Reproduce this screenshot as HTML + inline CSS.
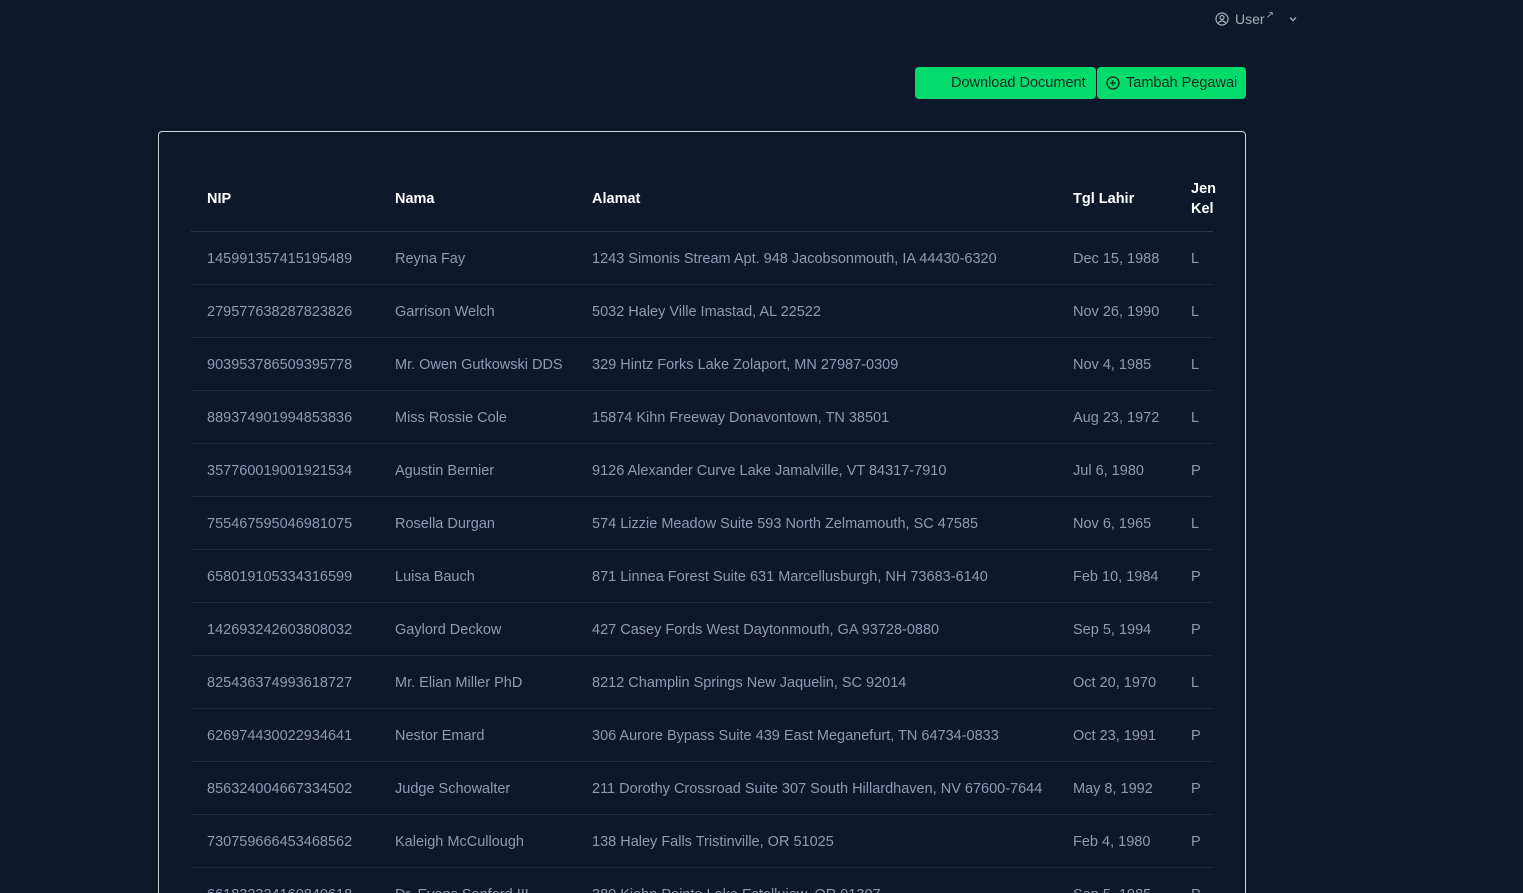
<!DOCTYPE html>
<html><head><meta charset="utf-8"><style>
*{box-sizing:border-box;margin:0;padding:0}
html,body{width:1523px;height:893px;overflow:hidden}
body{background:#0f172a;font-family:"Liberation Sans",sans-serif;color:#94a3b8;position:relative}
.user{position:absolute;left:1215px;top:11px;font-size:14px;color:#a6adbb;display:flex;align-items:center;gap:6px}
.btn{position:absolute;top:67px;height:32px;background:#04db6d;color:#0f2a1e;font-size:14.5px;border-radius:4px;display:flex;align-items:center}
.card{position:absolute;left:158px;top:131px;width:1088px;height:800px;border:1px solid #d0d4dc;border-radius:4px}
table{position:absolute;left:32px;top:32px;width:1022px;border-collapse:collapse;font-size:14.5px;table-layout:fixed}
th{color:#fff;font-weight:bold;text-align:left;height:67px;padding:3px 16px 0;border-bottom:1px solid #2d3748;line-height:20px}
td{height:53px;padding:2px 16px 0;border-bottom:1px solid #1f2a3b;color:#8d9bb3;white-space:nowrap}
th:last-child,td:last-child{padding-right:0}
</style></head><body>
<div class="user"><svg width="14" height="14" viewBox="0 0 14 14" fill="none" stroke="#a6adbb" stroke-width="1.2"><circle cx="7" cy="7" r="6"/><circle cx="7" cy="5.5" r="2"/><path d="M3.2 11.2c1-1.6 2.3-2.2 3.8-2.2s2.8.6 3.8 2.2"/></svg><span>User</span><span style="font-size:10px;margin:-8px 0 0 -5px">↗</span><svg style="margin-left:8px" width="10" height="8" viewBox="0 0 10 8" fill="none" stroke="#a6adbb" stroke-width="1.4"><path d="M2 2.5l3 3 3-3"/></svg></div>
<div class="btn" style="left:915px;width:181px;padding-left:36px">Download Document</div>
<div class="btn" style="left:1097px;width:149px;padding-left:9px"><svg width="14" height="14" viewBox="0 0 14 14" fill="none" stroke="#0f2a1e" stroke-width="1.3" style="margin-right:6px"><circle cx="7" cy="7" r="6"/><path d="M7 4v6M4 7h6"/></svg>Tambah Pegawai</div>
<div class="card"><table>
<colgroup><col style="width:188px"><col style="width:197px"><col style="width:481px"><col style="width:118px"><col style="width:38px"></colgroup>
<tr><th>NIP</th><th>Nama</th><th>Alamat</th><th>Tgl Lahir</th><th>Jen<br>Kel</th></tr>
<tr><td>145991357415195489</td><td>Reyna Fay</td><td>1243 Simonis Stream Apt. 948 Jacobsonmouth, IA 44430-6320</td><td>Dec 15, 1988</td><td>L</td></tr>
<tr><td>279577638287823826</td><td>Garrison Welch</td><td>5032 Haley Ville Imastad, AL 22522</td><td>Nov 26, 1990</td><td>L</td></tr>
<tr><td>903953786509395778</td><td>Mr. Owen Gutkowski DDS</td><td>329 Hintz Forks Lake Zolaport, MN 27987-0309</td><td>Nov 4, 1985</td><td>L</td></tr>
<tr><td>889374901994853836</td><td>Miss Rossie Cole</td><td>15874 Kihn Freeway Donavontown, TN 38501</td><td>Aug 23, 1972</td><td>L</td></tr>
<tr><td>357760019001921534</td><td>Agustin Bernier</td><td>9126 Alexander Curve Lake Jamalville, VT 84317-7910</td><td>Jul 6, 1980</td><td>P</td></tr>
<tr><td>755467595046981075</td><td>Rosella Durgan</td><td>574 Lizzie Meadow Suite 593 North Zelmamouth, SC 47585</td><td>Nov 6, 1965</td><td>L</td></tr>
<tr><td>658019105334316599</td><td>Luisa Bauch</td><td>871 Linnea Forest Suite 631 Marcellusburgh, NH 73683-6140</td><td>Feb 10, 1984</td><td>P</td></tr>
<tr><td>142693242603808032</td><td>Gaylord Deckow</td><td>427 Casey Fords West Daytonmouth, GA 93728-0880</td><td>Sep 5, 1994</td><td>P</td></tr>
<tr><td>825436374993618727</td><td>Mr. Elian Miller PhD</td><td>8212 Champlin Springs New Jaquelin, SC 92014</td><td>Oct 20, 1970</td><td>L</td></tr>
<tr><td>626974430022934641</td><td>Nestor Emard</td><td>306 Aurore Bypass Suite 439 East Meganefurt, TN 64734-0833</td><td>Oct 23, 1991</td><td>P</td></tr>
<tr><td>856324004667334502</td><td>Judge Schowalter</td><td>211 Dorothy Crossroad Suite 307 South Hillardhaven, NV 67600-7644</td><td>May 8, 1992</td><td>P</td></tr>
<tr><td>730759666453468562</td><td>Kaleigh McCullough</td><td>138 Haley Falls Tristinville, OR 51025</td><td>Feb 4, 1980</td><td>P</td></tr>
<tr><td>661832324160840618</td><td>Dr. Evans Sanford III</td><td>380 Kiehn Pointe Lake Estelluiew, OR 91307</td><td>Sep 5, 1985</td><td>P</td></tr>
</table></div>
</body></html>
